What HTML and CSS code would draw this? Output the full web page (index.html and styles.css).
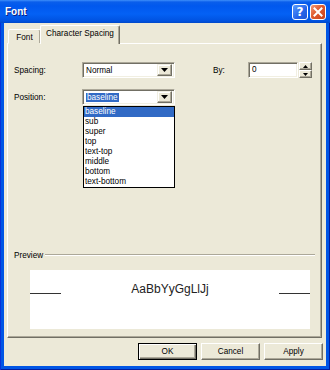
FILE: index.html
```html
<!DOCTYPE html>
<html>
<head>
<meta charset="utf-8">
<link rel="stylesheet" href="styles.css">
</head>
<body>
<div class="window">
  <div class="titlebar">
    <span class="title">Font</span>
    <div class="tbtns">
      <span class="tb help">?</span>
      <span class="tb close"><svg width="10" height="10" viewBox="0 0 10 10"><path d="M1.5 1.5 L8.5 8.5 M8.5 1.5 L1.5 8.5" stroke="#fff" stroke-width="2" stroke-linecap="square"/></svg></span>
    </div>
  </div>
  <div class="client">
    <div class="tabs">
      <div class="tab">Font</div>
      <div class="tab active">Character Spacing</div>
    </div>
    <div class="panel">
      <div class="row r1">
        <span class="lbl">Spacing:</span>
        <div class="combo"><span class="val">Normal</span><span class="arrow"><svg width="7" height="4" viewBox="0 0 7 4"><polygon points="0,0 7,0 3.5,4" fill="#000"/></svg></span></div>
        <span class="lbl by">By:</span>
        <div class="spin">
          <div class="spin-input">0</div>
          <div class="spin-btns">
            <span class="sbtn"><svg width="5" height="3" viewBox="0 0 5 3"><polygon points="2.5,0 5,3 0,3" fill="#000"/></svg></span>
            <span class="sbtn"><svg width="5" height="3" viewBox="0 0 5 3"><polygon points="0,0 5,0 2.5,3" fill="#000"/></svg></span>
          </div>
        </div>
      </div>
      <div class="row r2">
        <span class="lbl">Position:</span>
        <div class="combo open"><span class="val"><span class="sel">baseline</span></span><span class="arrow"><svg width="7" height="4" viewBox="0 0 7 4"><polygon points="0,0 7,0 3.5,4" fill="#000"/></svg></span>
          <ul class="dropdown">
            <li class="hl">baseline</li>
            <li>sub</li>
            <li>super</li>
            <li>top</li>
            <li>text-top</li>
            <li>middle</li>
            <li>bottom</li>
            <li>text-bottom</li>
          </ul>
        </div>
      </div>
      <div class="preview-head"><span>Preview</span><span class="sep"></span></div>
      <div class="preview-box">
        <span class="pv-line"></span>
        <span class="pv-text">AaBbYyGgLlJj</span>
        <span class="pv-line"></span>
      </div>
    </div>
    <div class="buttons">
      <button class="btn default">OK</button>
      <button class="btn">Cancel</button>
      <button class="btn">Apply</button>
    </div>
  </div>
</div>
</body>
</html>
```
FILE: styles.css
```css
html, body {
  margin: 0;
  padding: 0;
}
body {
  font-family: "Liberation Sans", Arial, sans-serif;
  font-size: 8.2px;
  color: #000;
}
.window {
  width: 330px;
  height: 370px;
  box-sizing: border-box;
  display: flex;
  flex-direction: column;
  background: #0055E5;
  padding: 0 4px 4px 4px;
  box-shadow: inset 1px 0 #0831D9, inset -1px 0 #001EA0, inset 0 -1px #001EA0;
}
.titlebar {
  height: 23px;
  margin: 0 -4px;
  display: flex;
  align-items: center;
  justify-content: space-between;
  padding: 0 4px 0 5px;
  background: linear-gradient(#3D8FFA 0, #0A5EEB 2px, #0058EE 6px, #0461F5 14px, #0052E0 21px, #0048C8 23px);
}
.title {
  color: #fff;
  font-weight: bold;
  font-size: 10px;
  text-shadow: 1px 1px 0 #0A1E80;
}
.tbtns {
  display: flex;
  gap: 2px;
}
.tb {
  width: 16px;
  height: 16px;
  box-sizing: border-box;
  border: 1px solid #fff;
  border-radius: 3px;
  display: flex;
  align-items: center;
  justify-content: center;
  color: #fff;
}
.help {
  background: linear-gradient(135deg, #5A9CFF, #2563E8 60%, #1F55D6);
  font-family: "DejaVu Sans", sans-serif;
  font-weight: bold;
  font-size: 12px;
  line-height: 14px;
}
.close {
  background: linear-gradient(135deg, #F39A7A, #E05A2E 45%, #C8431D);
}
.client {
  flex: 1;
  background: #ECE9D8;
  display: flex;
  flex-direction: column;
  padding: 3px 4px 0 3px;
}
.tabs {
  display: flex;
  align-items: flex-end;
  height: 18px;
  margin-bottom: -1px;
  position: relative;
  z-index: 1;
}
.tab {
  box-sizing: border-box;
  height: 15px;
  border: 1px solid;
  border-color: #fff #716F64 transparent #fff;
  border-radius: 2px 2px 0 0;
  box-shadow: inset -1px 0 #ACA899;
  line-height: 13px;
  padding: 1px 0 0 0;
  text-align: center;
  background: #ECE9D8;
}
.tab:first-child {
  margin-left: 1px;
  width: 33px;
}
.tab.active {
  height: 19px;
  width: 80px;
  margin-left: -1px;
  padding-top: 1px;
  border-bottom: none;
}
.panel {
  position: relative;
  box-sizing: border-box;
  height: 295px;
  border: 1px solid;
  border-color: #fff #716F64 #716F64 #fff;
  box-shadow: inset -1px -1px #ACA899;
  padding: 18px 6px 0 6px;
  display: flex;
  flex-direction: column;
}
.row {
  display: flex;
  align-items: center;
  height: 16px;
}
.r2 {
  margin-top: 11px;
}
.lbl {
  width: 68px;
}
.lbl.by {
  width: 35px;
  margin-left: 38px;
}
.combo {
  position: relative;
  box-sizing: border-box;
  width: 93px;
  height: 16px;
  background: #fff;
  border: 1px solid;
  border-color: #ACA899 #fff #fff #ACA899;
  box-shadow: inset 1px 1px #716F64, inset -1px -1px #F1EFE2;
  display: flex;
  align-items: center;
  padding: 0 2px 0 2px;
}
.val {
  flex: 1;
  padding-left: 1px;
  line-height: 11px;
}
.sel {
  background: #316AC5;
  color: #fff;
  padding: 0 1px;
}
.arrow {
  box-sizing: border-box;
  width: 15px;
  height: 12px;
  background: #ECE9D8;
  border: 1px solid;
  border-color: #F1EFE2 #716F64 #716F64 #F1EFE2;
  box-shadow: inset -1px -1px #ACA899, inset 1px 1px #fff;
  display: flex;
  align-items: center;
  justify-content: center;
}
.dropdown {
  position: absolute;
  left: 0;
  top: 16px;
  width: 92px;
  box-sizing: border-box;
  margin: 0;
  padding: 0;
  list-style: none;
  background: #fff;
  border: 1px solid #000;
}
.dropdown li {
  height: 10px;
  line-height: 10px;
  padding-left: 1px;
}
.dropdown li.hl {
  background: #316AC5;
  color: #fff;
}
.spin {
  display: flex;
  height: 16px;
}
.spin-input {
  box-sizing: border-box;
  width: 50px;
  height: 16px;
  background: #fff;
  border: 1px solid;
  border-color: #ACA899 #fff #fff #ACA899;
  box-shadow: inset 1px 1px #716F64, inset -1px -1px #F1EFE2;
  padding-left: 3px;
  line-height: 14px;
}
.spin-btns {
  margin-left: 1px;
  width: 13px;
  display: flex;
  flex-direction: column;
}
.sbtn {
  box-sizing: border-box;
  height: 8px;
  background: #ECE9D8;
  border: 1px solid;
  border-color: #fff #716F64 #716F64 #fff;
  box-shadow: inset -1px -1px #ACA899;
  display: flex;
  align-items: center;
  justify-content: center;
}
.preview-head {
  margin-top: 145px;
  height: 10px;
  display: flex;
  align-items: center;
}
.sep {
  flex: 1;
  margin-left: 2px;
  height: 0;
  border-top: 1px solid #ACA899;
  border-bottom: 1px solid #fff;
}
.preview-box {
  margin: 10px 0 0 16px;
  width: 280px;
  height: 59px;
  background: #fff;
  display: flex;
  align-items: flex-start;
}
.pv-line {
  width: 31px;
  height: 1px;
  background: #333;
  margin-top: 23px;
}
.pv-text {
  flex: 1;
  text-align: center;
  font-size: 12px;
  line-height: 14px;
  margin-top: 12px;
  color: #222;
}
.buttons {
  display: flex;
  justify-content: flex-end;
  gap: 4px;
  margin: 5px -1px 0 0;
}
.btn {
  box-sizing: border-box;
  width: 59px;
  height: 17px;
  padding: 0;
  font-family: "Liberation Sans", Arial, sans-serif;
  font-size: 8.2px;
  color: #000;
  background: #ECE9D8;
  border: 1px solid;
  border-color: #fff #716F64 #716F64 #fff;
  box-shadow: inset -1px -1px #ACA899;
}
.btn.default {
  border: 1px solid #000;
  box-shadow: inset 1px 1px #fff, inset -1px -1px #716F64, inset -2px -2px #ACA899;
}
```
